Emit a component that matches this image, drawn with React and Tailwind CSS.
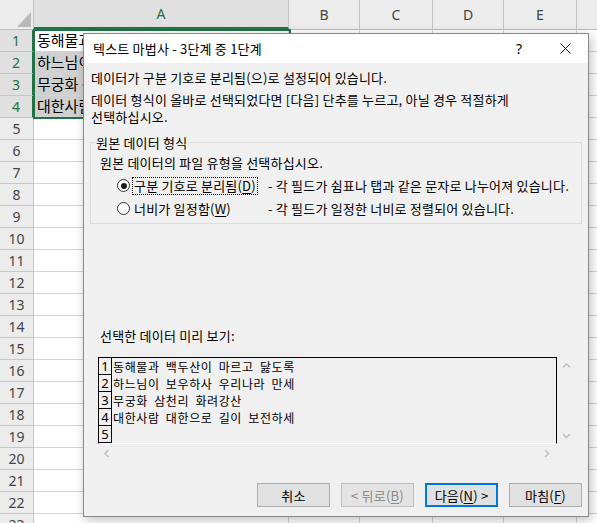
import React from "react";

const KR = "font-['Noto_Sans_CJK_KR','Noto_Sans',sans-serif]";

const U = ({ children }) => (
  <span className="underline underline-offset-[2px] decoration-[1px]">{children}</span>
);

function Chevron({ dir }) {
  const d = {
    up: "M1 5.5 L4.5 2 L8 5.5",
    down: "M1 2 L4.5 5.5 L8 2",
    left: "M5.5 1 L2 4.5 L5.5 8",
    right: "M2 1 L5.5 4.5 L2 8",
  }[dir];
  return (
    <svg width="9" height="9" viewBox="0 0 9 9">
      <path d={d} fill="none" stroke="#c2c2c2" strokeWidth="1.6" />
    </svg>
  );
}

const excelRows = [
  "동해물과 백두산이 마르고 닳도록",
  "하느님이 보우하사 우리나라 만세",
  "무궁화 삼천리 화려강산",
  "대한사람 대한으로 길이 보전하세",
];

function Sheet() {
  const rows = Array.from({ length: 23 }, (_, i) => i + 1);
  return (
    <div className="flex flex-col">
      <div className="flex h-[30px] bg-[#ececec] border-b border-[#bdbdbd] font-['Noto_Sans',sans-serif] text-[14px] text-[#444]">
        <div className="relative w-[34px] border-r border-[#c6c6c6]">
          <svg className="absolute left-0 top-0" width="34" height="29" viewBox="0 0 34 29">
            <polygon points="17,27 31,12 31,27" fill="#b9b9b9" />
          </svg>
        </div>
        <div className="w-[255px] border-r border-[#c6c6c6] bg-[#e0e0e0] text-[#217346] flex items-center justify-center border-b-2 border-b-[#217346]">A</div>
        <div className="w-[71px] border-r border-[#c6c6c6] flex items-center justify-center">B</div>
        <div className="w-[73px] border-r border-[#c6c6c6] flex items-center justify-center">C</div>
        <div className="w-[71px] border-r border-[#c6c6c6] flex items-center justify-center">D</div>
        <div className="w-[73px] border-r border-[#c6c6c6] flex items-center justify-center">E</div>
        <div className="flex-1" />
      </div>
      {rows.map((r) => {
        const sel = r <= 4;
        return (
          <div key={r} className="flex h-[22px] shrink-0">
            <div
              className={
                "w-[34px] border-b border-r flex items-center justify-center font-['Noto_Sans',sans-serif] text-[14px] " +
                (sel
                  ? "bg-[#e0e0e0] text-[#217346] border-b-[#c6c6c6] border-r-[#217346] border-r-2"
                  : "bg-[#ececec] text-[#444] border-[#c6c6c6]")
              }
            >
              {r}
            </div>
            <div
              className={
                "w-[255px] border-b border-r border-[#d4d4d4] pl-[3px] flex items-center overflow-hidden whitespace-nowrap text-[15px] text-black " +
                KR +
                (r >= 2 && r <= 4 ? " bg-[#d0d0d0]" : " bg-white")
              }
            >
              {sel ? excelRows[r - 1] : ""}
            </div>
            <div className="w-[71px] border-b border-r border-[#d4d4d4] bg-white" />
            <div className="w-[73px] border-b border-r border-[#d4d4d4] bg-white" />
            <div className="w-[71px] border-b border-r border-[#d4d4d4] bg-white" />
            <div className="w-[73px] border-b border-r border-[#d4d4d4] bg-white" />
            <div className="flex-1 border-b border-[#d4d4d4] bg-white" />
          </div>
        );
      })}
    </div>
  );
}

function Radio({ checked }) {
  return (
    <div className="w-[13px] h-[13px] rounded-full border border-[#333] bg-white flex items-center justify-center shrink-0">
      {checked && <div className="w-[6px] h-[6px] rounded-full bg-[#1a1a1a]" />}
    </div>
  );
}

function Btn({ children, variant }) {
  const base = "w-[73px] h-[24px] flex items-center justify-center text-[13px] tracking-[0.2px] leading-none ";
  if (variant === "default")
    return <div className={base + "border-2 border-[#0078d7] bg-[#e1e1e1] text-black"}>{children}</div>;
  if (variant === "disabled")
    return <div className={base + "border border-[#bfbfbf] bg-[#e3e3e3] text-[#8a8a8a]"}>{children}</div>;
  return <div className={base + "border border-[#adadad] bg-[#e1e1e1] text-black"}>{children}</div>;
}

const preview = [
  "동해물과 백두산이 마르고 닳도록",
  "하느님이 보우하사 우리나라 만세",
  "무궁화 삼천리 화려강산",
  "대한사람 대한으로 길이 보전하세",
  "",
  "",
];

function Dialog() {
  return (
    <div className={"absolute left-[83px] top-[33px] w-[506px] h-[484px] border border-[#888] bg-[#f0f0f0] shadow-[2px_3px_10px_rgba(0,0,0,0.25)] flex flex-col text-black " + KR}>
      <div className="h-[29px] bg-white flex items-center shrink-0">
        <div className="pl-[9px] text-[13px] tracking-[0.2px] leading-none">텍스트 마법사 - 3단계 중 1단계</div>
        <div className="ml-auto flex h-full">
          <div className="w-[46px] flex items-center justify-center text-[14px] font-['Noto_Sans',sans-serif]">?</div>
          <div className="w-[46px] flex items-center justify-center">
            <svg width="11" height="11" viewBox="0 0 11 11">
              <path d="M0.5 0.5 L10.5 10.5 M10.5 0.5 L0.5 10.5" stroke="#111" strokeWidth="1" />
            </svg>
          </div>
        </div>
      </div>
      <div className="flex-1 flex flex-col text-[13px] tracking-[0.2px] leading-[17px]">
        <div className="pt-[6px] pl-[7px]">데이터가 구분 기호로 분리됨(으)로 설정되어 있습니다.</div>
        <div className="mt-[5px] pl-[7px]">
          데이터 형식이 올바로 선택되었다면 [다음] 단추를 누르고, 아닐 경우 적절하게
          <br />
          선택하십시오.
        </div>
        <fieldset className="mt-[9px] mx-[6px] border border-[#dcdcdc] pb-[3px]">
          <legend className="ml-[4px] px-[1px] leading-[17px]">원본 데이터 형식</legend>
          <div className="pl-[9px] mt-[3px]">원본 데이터의 파일 유형을 선택하십시오.</div>
          <div className="mt-[3px] h-[23px] flex items-center pl-[26px]">
            <Radio checked />
            <div className="w-[138px] pl-[2px] flex items-center">
              <div className="h-[18px] border border-dotted border-black px-[1px] flex items-center">
                구분 기호로 분리됨(<U>D</U>)
              </div>
            </div>
            <div className="whitespace-nowrap">- 각 필드가 쉼표나 탭과 같은 문자로 나누어져 있습니다.</div>
          </div>
          <div className="h-[23px] flex items-center pl-[26px]">
            <Radio />
            <div className="w-[138px] pl-[4px] flex items-center">
              너비가 일정함(<U>W</U>)
            </div>
            <div className="whitespace-nowrap">- 각 필드가 일정한 너비로 정렬되어 있습니다.</div>
          </div>
        </fieldset>
        <div className="mt-[103px] pl-[16px]">선택한 데이터 미리 보기:</div>
        <div className="mt-[13px] ml-[14px] grid grid-cols-[459px_18px] grid-rows-[87px_18px] w-[477px]">
          <div className="border-t border-l border-r border-black border-b border-b-white overflow-hidden whitespace-nowrap">
            {preview.map((t, i) => (
              <div key={i} className="flex h-[17px]">
                <div className="w-[13px] shrink-0 border-r border-b border-black flex items-center justify-center text-[13px] tracking-normal leading-none font-['Noto_Sans',sans-serif]">
                  {i < 5 ? i + 1 : ""}
                </div>
                <div className="pl-[1px] text-[12px] tracking-[0.6px] leading-[17px] [word-spacing:3px]">{t}</div>
              </div>
            ))}
          </div>
          <div className="flex flex-col items-center justify-between pt-[5px] pb-[3px]">
            <Chevron dir="up" />
            <Chevron dir="down" />
          </div>
          <div className="flex items-center justify-between px-[5px]">
            <Chevron dir="left" />
            <Chevron dir="right" />
          </div>
          <div />
        </div>
        <div className="mt-[21px] pr-[6px] flex justify-end gap-[11px]">
          <Btn>취소</Btn>
          <Btn variant="disabled">&lt; 뒤로(<U>B</U>)</Btn>
          <Btn variant="default">
            다음(<U>N</U>) &gt;
          </Btn>
          <Btn>
            마침(<U>F</U>)
          </Btn>
        </div>
      </div>
    </div>
  );
}

export default function App() {
  return (
    <div className="relative w-[597px] h-[523px] overflow-hidden bg-white">
      <Sheet />
      <div className="absolute left-[33px] top-[29px] w-[258px] h-[90px] border-2 border-[#217346]" />
      <Dialog />
    </div>
  );
}
